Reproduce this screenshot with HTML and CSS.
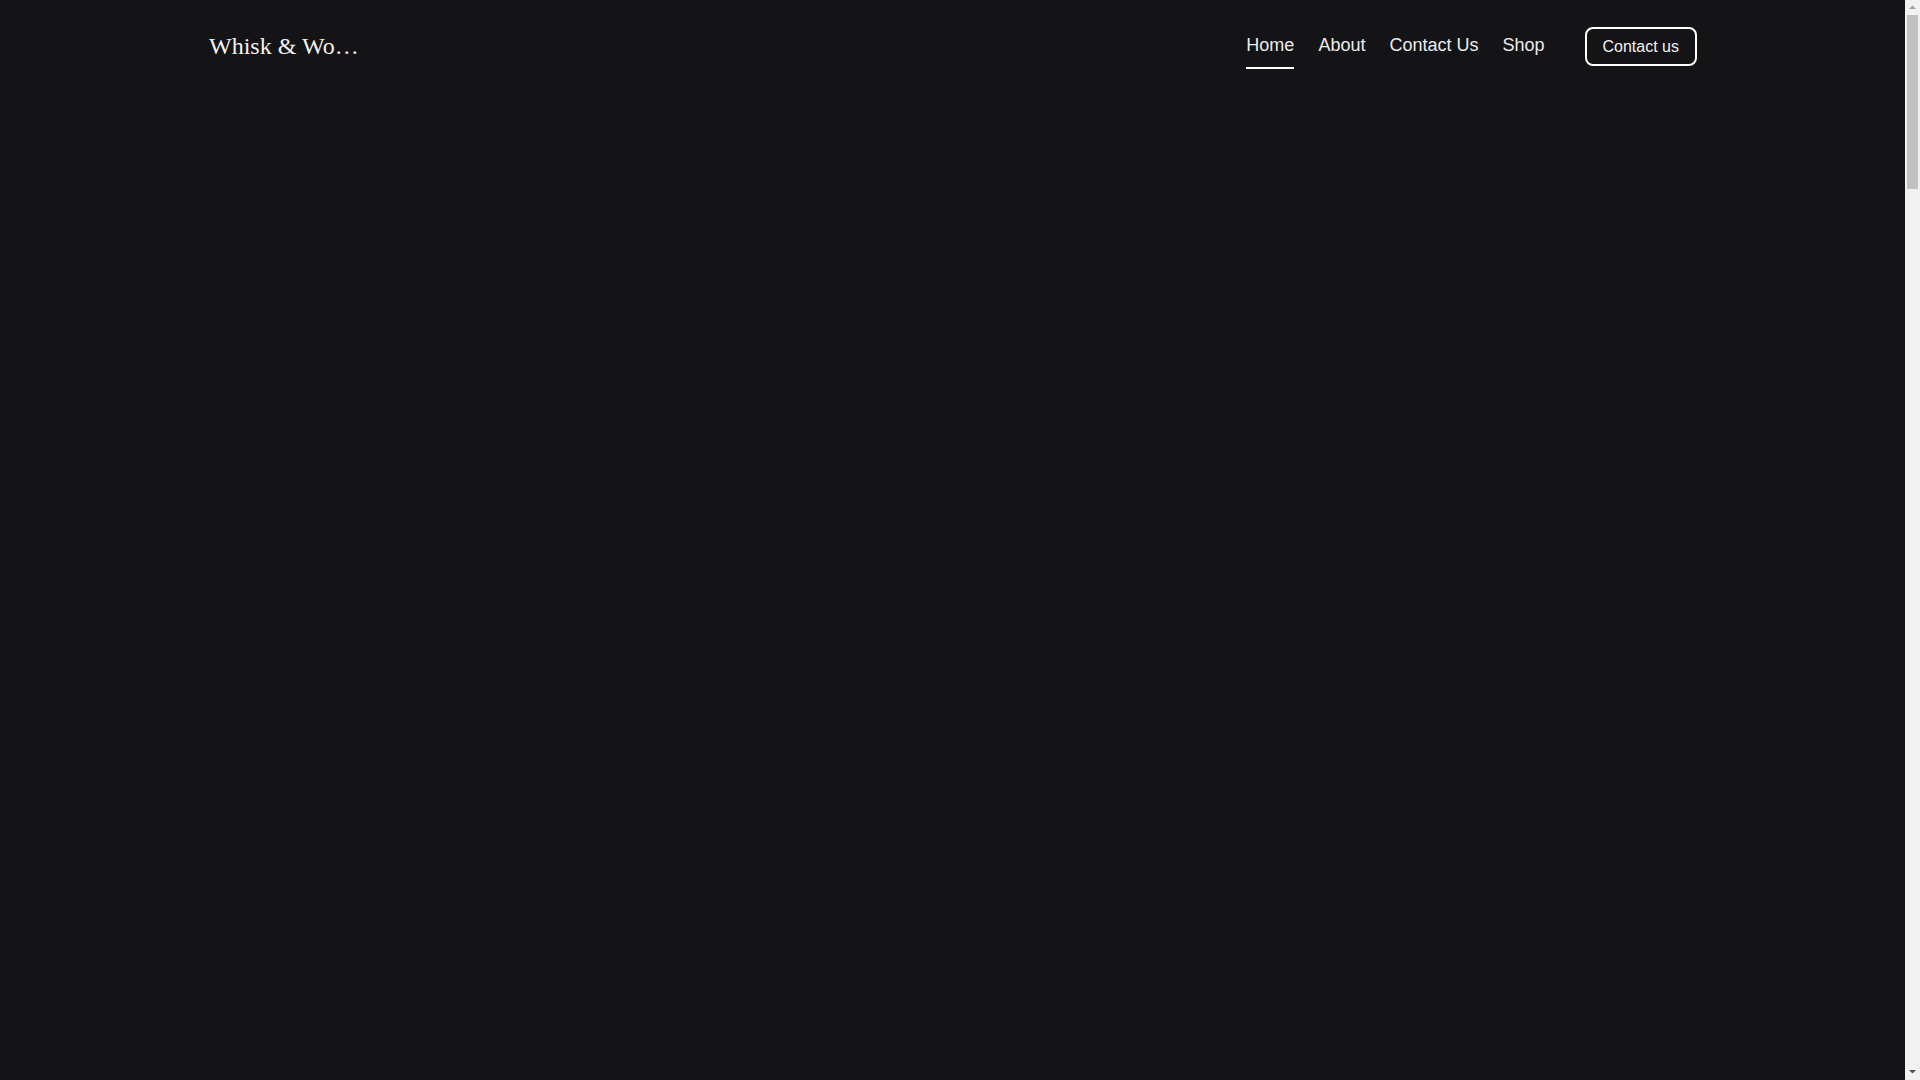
FILE: index.html
```html
<!DOCTYPE html>
<html lang="en">
<head>
<meta charset="utf-8">
<title>Whisk &amp; Wooden Spoon</title>
<link rel="stylesheet" href="styles.css">
</head>
<body>
<div class="page">
  <header class="site-header">
    <a class="logo" href="#">Whisk &amp; Wooden Spoon</a>
    <div class="header-right">
      <nav class="main-nav">
        <a class="nav-link active" href="#">Home</a>
        <a class="nav-link" href="#">About</a>
        <a class="nav-link" href="#">Contact Us</a>
        <a class="nav-link" href="#">Shop</a>
      </nav>
      <a class="btn-outline" href="#">Contact us</a>
    </div>
  </header>
  <main class="page-body"></main>
</div>
<div class="scrollbar" aria-hidden="true">
  <svg class="sb-arrow" width="15" height="15" viewBox="0 0 15 15"><polygon points="4,9 7.5,5.5 11,9" fill="#a3a3a3"/></svg>
  <div class="sb-track"><div class="sb-thumb"></div></div>
  <svg class="sb-arrow" width="15" height="15" viewBox="0 0 15 15"><polygon points="4,5 11,5 7.5,8.5" fill="#505050"/></svg>
</div>
</body>
</html>
```

FILE: styles.css
```css
html, body {
  margin: 0;
  padding: 0;
  background: #141316;
}
body {
  font-family: "Liberation Sans", Arial, sans-serif;
  color: #f2f2f2;
}
a {
  color: inherit;
  text-decoration: none;
}
.page {
  margin-right: 15px;
}
.site-header {
  height: 93px;
  padding: 0 208px;
  display: flex;
  align-items: center;
  justify-content: space-between;
  box-sizing: border-box;
}
.logo {
  font-family: "Liberation Serif", "Times New Roman", serif;
  font-size: 24px;
  line-height: 1.2;
  max-width: 156px;
  white-space: nowrap;
  overflow: hidden;
  text-overflow: ellipsis;
  color: #f2f2f2;
  padding-left: 1px;
}
.header-right {
  display: flex;
  align-items: center;
}
.main-nav {
  display: flex;
  gap: 24px;
  margin-right: 40px;
}
.nav-link {
  font-size: 18px;
  line-height: 27px;
  padding: 7px 0 8px;
  border-bottom: 2px solid transparent;
  color: #ececec;
}
.nav-link.active {
  border-bottom-color: #ffffff;
}
.btn-outline {
  font-size: 16px;
  line-height: 19px;
  padding: 8px 16px;
  border: 2px solid #ffffff;
  border-radius: 8px;
  color: #f2f2f2;
}
.page-body {
  min-height: 6460px;
}
.scrollbar {
  position: fixed;
  top: 0;
  right: 0;
  width: 15px;
  height: 100vh;
  background: #f1f1f1;
  display: flex;
  flex-direction: column;
}
.sb-arrow {
  display: block;
  flex: none;
}
.sb-track {
  flex: 1;
  padding: 0 2px;
}
.sb-thumb {
  height: 174px;
  background: #c1c1c1;
}
```
